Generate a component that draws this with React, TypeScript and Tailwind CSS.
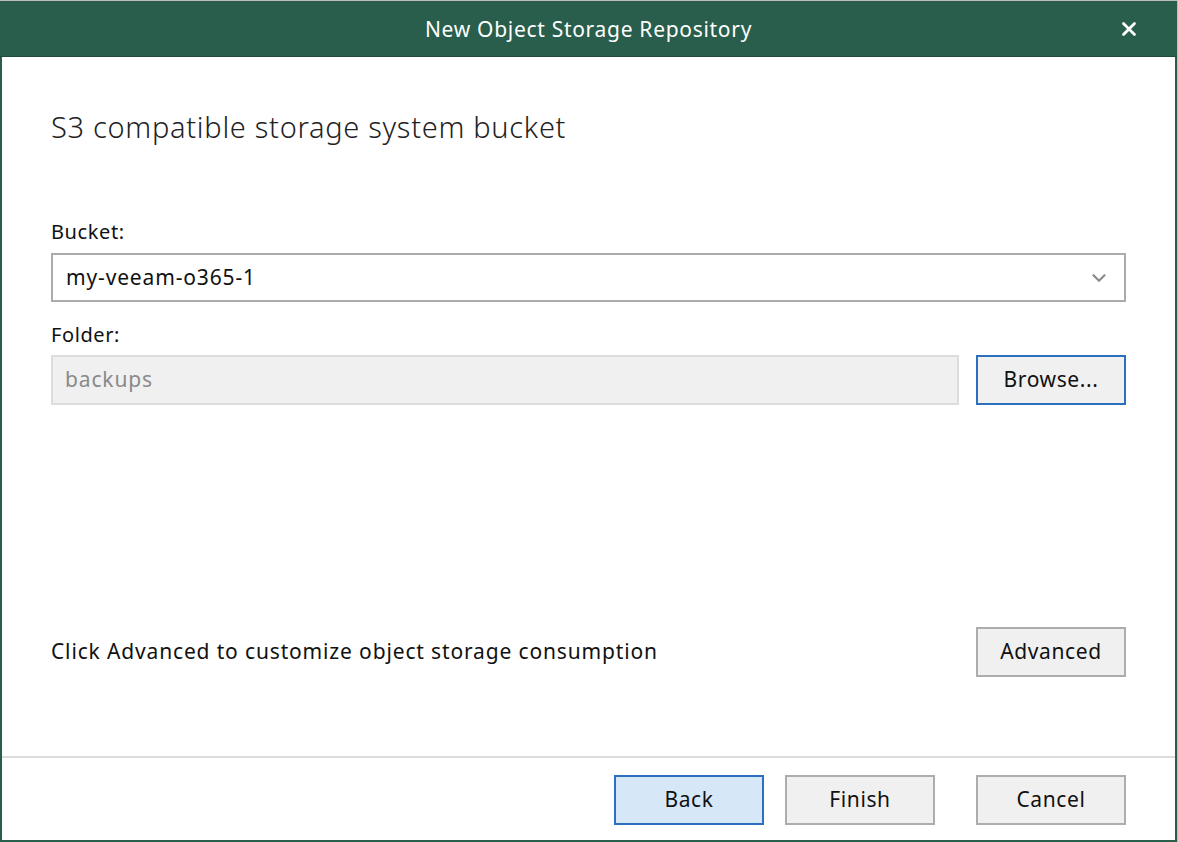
import { X, ChevronDown } from "lucide-react";

const font = { fontFamily: '"Noto Sans", "Open Sans", sans-serif' };

interface BtnProps {
    label: string;
    variant?: "default" | "focused" | "primary";
}

const DialogButton: React.FC<BtnProps> = ({ label, variant = "default" }) => {
    const styles = {
        default: "bg-[#f0f0f0] border-[#adadad]",
        focused: "bg-[#f0f0f0] border-[#2c6fbe]",
        primary: "bg-[#d6e7f8] border-[#2c6fbe]",
    };
    return (
        <button
            className={`w-[150px] h-[50px] border-2 text-[21px] tracking-[0.6px] text-[#111] flex items-center justify-center ${styles[variant]}`}
        >
            {label}
        </button>
    );
};

export default function App() {
    return (
        <div className="w-[1178px] h-[842px] bg-[#bdbdbd] pt-px pr-px overflow-hidden" style={font}>
            <div className="h-full flex flex-col bg-white border-l-2 border-r-2 border-b-2 border-[#285e4b]">
                {/* title bar */}
                <div className="h-[56px] shrink-0 bg-[#285e4b] border-b border-[#1f4d3d] flex items-center relative -ml-[2px] -mr-[2px]">
                    <div className="flex-1 text-center text-white text-[21px] tracking-[0.7px] pt-[2px]">New Object Storage Repository</div>
                    <X className="absolute right-[37px] top-[17px] text-white" size={22} strokeWidth={3} />
                </div>

                {/* content */}
                <div className="flex-1 flex flex-col pl-[49px] pr-[49px]">
                    <h1 className="mt-[52px] text-[29px] leading-[36px] tracking-[0.7px] text-[#222] font-light">
                        S3 compatible storage system bucket
                    </h1>

                    <label className="mt-[74px] text-[20px] leading-[26px] tracking-[0.6px] text-[#111]">Bucket:</label>
                    <div className="mt-[8px] h-[49px] border-2 border-[#ababab] flex items-center justify-between pl-[13px] pr-[14px]">
                        <span className="text-[21px] tracking-[0.85px] text-[#111]">my-veeam-o365-1</span>
                        <ChevronDown className="text-[#8c8c8c]" size={22} strokeWidth={2.5} />
                    </div>

                    <label className="mt-[20px] text-[20px] leading-[26px] tracking-[0.6px] text-[#111]">Folder:</label>
                    <div className="mt-[7px] flex gap-[17px]">
                        <div className="flex-1 h-[50px] bg-[#f0f0f0] border-2 border-[#dcdcdc] flex items-center pl-[12px]">
                            <span className="text-[21px] tracking-[0.85px] text-[#8a8a8a]">backups</span>
                        </div>
                        <DialogButton label="Browse..." variant="focused" />
                    </div>

                    <div className="flex-1" />

                    <div className="mb-[79px] flex items-center justify-between">
                        <span className="text-[21px] tracking-[0.85px] text-[#111]">Click Advanced to customize object storage consumption</span>
                        <DialogButton label="Advanced" />
                    </div>
                </div>

                {/* footer */}
                <div className="h-[2px] bg-[#dcdcdc] shrink-0" />
                <div className="shrink-0 flex justify-end pt-[17px] pb-[15px] pr-[49px]">
                    <DialogButton label="Back" variant="primary" />
                    <div className="ml-[21px]">
                        <DialogButton label="Finish" />
                    </div>
                    <div className="ml-[41px]">
                        <DialogButton label="Cancel" />
                    </div>
                </div>
            </div>
        </div>
    );
}
